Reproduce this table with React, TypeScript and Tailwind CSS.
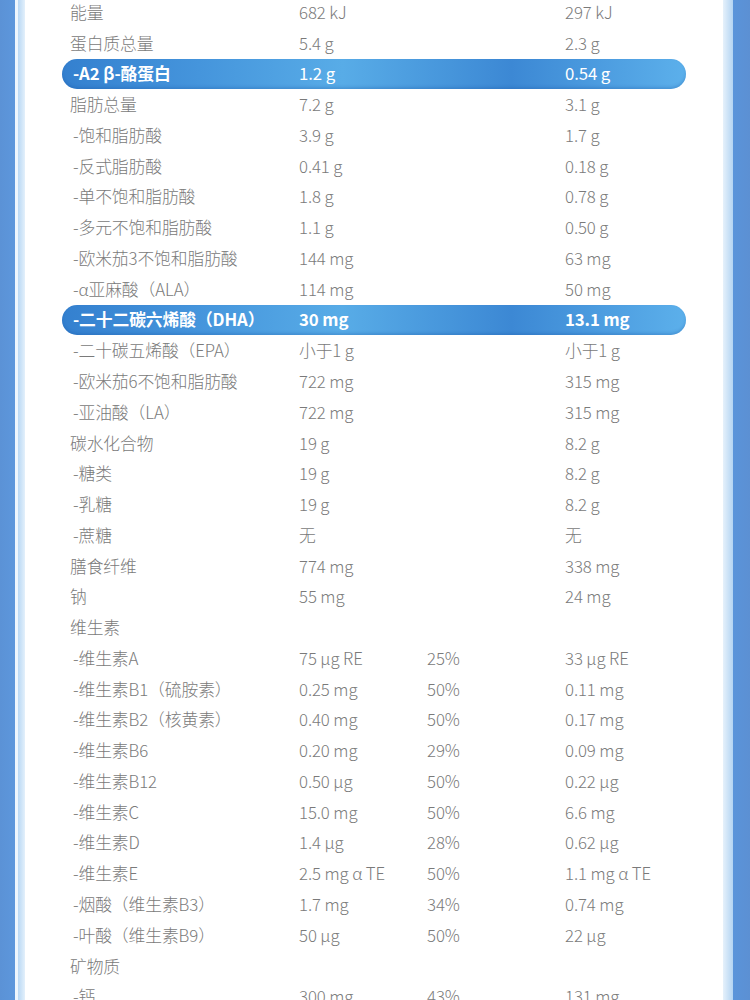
import React, { FC } from "react";

type Row = {
  label: string;
  v1?: string;
  pct?: string;
  v2?: string;
  sub?: boolean;
  hl?: "plain" | "bold";
};

const rows: Row[] = [
  { label: "能量", v1: "682 kJ", v2: "297 kJ" },
  { label: "蛋白质总量", v1: "5.4 g", v2: "2.3 g" },
  { label: "-A2 β-酪蛋白", v1: "1.2 g", v2: "0.54 g", sub: true, hl: "plain" },
  { label: "脂肪总量", v1: "7.2 g", v2: "3.1 g" },
  { label: "-饱和脂肪酸", v1: "3.9 g", v2: "1.7 g", sub: true },
  { label: "-反式脂肪酸", v1: "0.41 g", v2: "0.18 g", sub: true },
  { label: "-单不饱和脂肪酸", v1: "1.8 g", v2: "0.78 g", sub: true },
  { label: "-多元不饱和脂肪酸", v1: "1.1 g", v2: "0.50 g", sub: true },
  { label: "-欧米茄3不饱和脂肪酸", v1: "144 mg", v2: "63 mg", sub: true },
  { label: "-α亚麻酸（ALA）", v1: "114 mg", v2: "50 mg", sub: true },
  { label: "-二十二碳六烯酸（DHA）", v1: "30 mg", v2: "13.1 mg", sub: true, hl: "bold" },
  { label: "-二十碳五烯酸（EPA）", v1: "小于1 g", v2: "小于1 g", sub: true },
  { label: "-欧米茄6不饱和脂肪酸", v1: "722 mg", v2: "315 mg", sub: true },
  { label: "-亚油酸（LA）", v1: "722 mg", v2: "315 mg", sub: true },
  { label: "碳水化合物", v1: "19 g", v2: "8.2 g" },
  { label: "-糖类", v1: "19 g", v2: "8.2 g", sub: true },
  { label: "-乳糖", v1: "19 g", v2: "8.2 g", sub: true },
  { label: "-蔗糖", v1: "无", v2: "无", sub: true },
  { label: "膳食纤维", v1: "774 mg", v2: "338 mg" },
  { label: "钠", v1: "55 mg", v2: "24 mg" },
  { label: "维生素" },
  { label: "-维生素A", v1: "75 μg RE", pct: "25%", v2: "33 μg RE", sub: true },
  { label: "-维生素B1（硫胺素）", v1: "0.25 mg", pct: "50%", v2: "0.11 mg", sub: true },
  { label: "-维生素B2（核黄素）", v1: "0.40 mg", pct: "50%", v2: "0.17 mg", sub: true },
  { label: "-维生素B6", v1: "0.20 mg", pct: "29%", v2: "0.09 mg", sub: true },
  { label: "-维生素B12", v1: "0.50 μg", pct: "50%", v2: "0.22 μg", sub: true },
  { label: "-维生素C", v1: "15.0 mg", pct: "50%", v2: "6.6 mg", sub: true },
  { label: "-维生素D", v1: "1.4 μg", pct: "28%", v2: "0.62 μg", sub: true },
  { label: "-维生素E", v1: "2.5 mg α TE", pct: "50%", v2: "1.1 mg α TE", sub: true },
  { label: "-烟酸（维生素B3）", v1: "1.7 mg", pct: "34%", v2: "0.74 mg", sub: true },
  { label: "-叶酸（维生素B9）", v1: "50 μg", pct: "50%", v2: "22 μg", sub: true },
  { label: "矿物质" },
  { label: "-钙", v1: "300 mg", pct: "43%", v2: "131 mg", sub: true },
];

const NutritionRow: FC<{ row: Row }> = ({ row }) => {
  const hl = !!row.hl;
  const bold = row.hl === "bold";
  return (
    <div
      className={`flex h-[30.77px] shrink-0 items-center rounded-full ${
        hl
          ? "bg-[linear-gradient(90deg,#3480cf_0%,#4595dc_22%,#58ace7_45%,#3c88d4_72%,#5cb0eb_100%)] text-white shadow-[inset_0_-2px_3px_rgba(20,80,160,0.25)]"
          : "font-light text-[#7a7a7a]"
      }`}
    >
      <div className={`w-[237px] shrink-0 whitespace-nowrap ${row.sub ? "pl-[11px]" : "pl-[8px]"} ${hl ? "font-bold" : ""}`}>
        {row.label}
      </div>
      <div className={`w-[128px] shrink-0 whitespace-nowrap ${bold ? "font-bold" : ""}`}>{row.v1}</div>
      <div className="w-[138px] shrink-0 whitespace-nowrap">{row.pct}</div>
      <div className={`whitespace-nowrap ${bold ? "font-bold" : ""}`}>{row.v2}</div>
    </div>
  );
};

const App: FC = () => {
  return (
    <div className="flex h-[1000px] w-[750px] overflow-hidden bg-white font-['Noto_Sans_CJK_SC',_'Noto_Sans',_sans-serif] text-[16.8px] tracking-[-0.1px]">
      {/* left frame */}
      <div className="flex w-[25px] shrink-0">
        <div className="w-[15px] bg-[linear-gradient(90deg,#5b92d6,#5d97dc)]" />
        <div className="w-[3px] bg-[#eef6fd]" />
        <div className="w-[7px] bg-[linear-gradient(90deg,#b9d8f4,#e3f0fb)]" />
      </div>

      {/* table */}
      <div className="flex flex-1 flex-col px-[37px] -mt-[3px]">
        {rows.map((r, i) => (
          <NutritionRow key={i} row={r} />
        ))}
      </div>

      {/* right frame */}
      <div className="flex w-[27px] shrink-0">
        <div className="w-[10px] bg-[linear-gradient(90deg,#e6f1fb,#b3d4f2)]" />
        <div className="w-[17px] bg-[linear-gradient(90deg,#5a94da,#5c90d3)]" />
      </div>
    </div>
  );
};

export default App;
